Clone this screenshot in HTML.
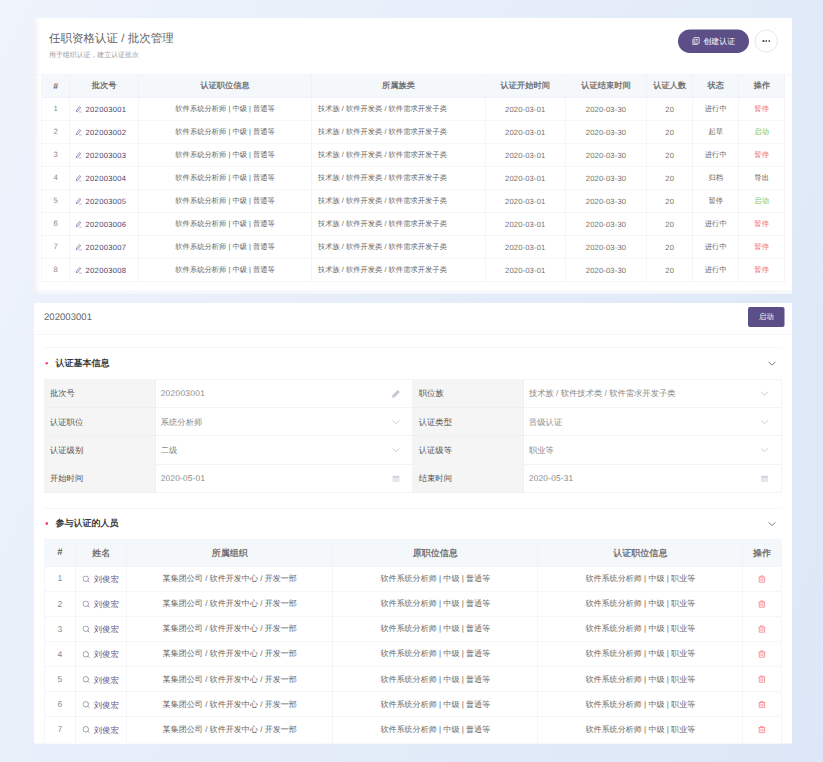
<!DOCTYPE html>
<html lang="zh">
<head>
<meta charset="utf-8">
<title>任职资格认证 / 批次管理</title>
<style>
*{box-sizing:border-box;margin:0;padding:0}
html,body{width:823px;height:762px;overflow:hidden;background:#e6edf9}
body{font-family:"Liberation Sans",sans-serif;color:#666;text-rendering:geometricPrecision;line-height:1.2}
#vp{position:absolute;left:0;top:0;width:823px;height:762px;overflow:hidden;
 background:linear-gradient(115deg,#eff4fc 0%,#e1eaf8 70%,#dee7f7 100%)}
#pg{position:absolute;left:0;top:0;width:1646px;height:1524px;transform:scale(.5);transform-origin:0 0}
.j{display:inline-block;flex:none;white-space:nowrap;text-align:justify;text-align-last:justify}
.card{position:absolute;background:#fff}
#c1{left:68px;top:36px;width:1516px;height:552px}
#ft{left:0;top:545px;width:1516px;height:7px;background:#f6f7fa}
#c2{left:68px;top:605.6px;width:1516px;height:881.8px;overflow:hidden}
.abs{position:absolute;white-space:nowrap}
#t1{left:30px;top:24.8px;font-size:23px;line-height:30px;color:#626262}
#t2{left:30px;top:64.2px;font-size:13.8px;line-height:18px;color:#9a9a9a}
#b1{left:1288.4px;top:22.8px;width:141.8px;height:46.8px;border-radius:24px;background:#5c4f88;color:#fff;font-size:15.8px;display:flex;align-items:center;justify-content:center;padding-right:2px}
#b2{left:1441.4px;top:22.8px;width:46.6px;height:46.6px;border-radius:50%;border:2px solid #e6e6ee;background:#fff;display:flex;align-items:center;justify-content:center}
#b2 i{display:block;width:3.4px;height:3.4px;border-radius:50%;background:#444;margin:0 1.2px}
#body1{left:0;top:111.6px;width:1516px;height:438.4px;border-top:1px solid #f0f1f5}
#lg{left:0;top:0;width:12px;height:552px;background:linear-gradient(90deg,rgba(228,228,234,.45),rgba(228,228,234,0))}
.tb{position:absolute;border-top:1px solid #e9ecf4;border-left:1px solid #e9ecf4;background:#fff}
.r{display:flex}
.c{flex:none;border-right:1px solid #e9ecf4;border-bottom:1px solid #e9ecf4;display:flex;align-items:center;justify-content:center;white-space:nowrap;overflow:hidden}
.h .c{background:#f5f8fb;color:#707070;font-weight:bold}
.h .hs{font-weight:bold;color:#6a6a6a;font-size:1.06em}
#tb1{left:15px;top:112.4px;width:1485.8px}
#tb1 .r{height:46px;font-size:14.6px}
#tb1 .h{height:46.8px;font-size:16.4px}
#tb1 .c{height:100%}
.l{justify-content:flex-start;padding-left:12px}
.n{color:#888;font-size:1.06em}
.l2{justify-content:flex-start;padding-left:11.4px}
.num{letter-spacing:.62px;font-size:15.2px}
.dt{letter-spacing:.3px}
#tb1 .c:not(.lk)>.num{color:#747474}
.fv .num{font-size:16.6px;letter-spacing:.64px}
.fv .dt{letter-spacing:.42px}
.lk{color:#4b4570}
.red{color:#f2676b}.grn{color:#79c253}.drk{color:#555}
svg{display:block;flex:none}
.pen{width:13px;height:13.4px;margin-right:7.2px;color:#5b4c8b}
.sea{width:14.6px;height:14.6px;margin-right:7.6px;color:#79748e;position:relative;top:.8px}
.tra{width:15.5px;height:16px;color:#f8878e}
.doc{width:20px;height:20px;margin-right:4.4px}
#b1 .j{position:relative;top:1.4px}
#h2{left:0;top:0;width:1516px;height:64.6px;border-bottom:1px solid #eceef2}
#h2t{left:20px;top:17.4px;font-size:19.2px;line-height:24px;color:#666}
#b3{left:1428.4px;top:8px;width:72.6px;height:40.4px;border-radius:4px;background:#5c4f88;color:#fff;font-size:14.6px;display:flex;align-items:center;justify-content:center}
.sl{left:19.8px;width:1474.8px;height:0;border-top:1px solid #eceef2}
.st{left:43px;font-size:18px;line-height:24px;font-weight:bold;color:#333}
.dot{left:22.6px;width:5.4px;height:5.4px;border-radius:50%;background:#f0457e}
.chev{width:20px;height:20px}
.sc{color:#777}
#fm{left:19.8px;top:152.8px;width:1474.8px;border-top:1px solid #e8e8e8;border-left:1px solid #e8e8e8;position:absolute}
#fm .r{height:56.5px;font-size:16.6px}
#fm .c{height:100%;border-color:#e8e8e8;justify-content:flex-start}
.fl{background:#f5f5f5;color:#4e4e4e;padding-left:11px}
.fv{color:#888;padding-left:9.4px;position:relative}
.fv svg{position:absolute;right:23px;top:50%;margin-top:-10px;color:#c3c9d6}
.cal,.penf{width:16px;height:16px}
.fv .penf{color:#c6c9d2;width:17.6px;height:17.6px}
.fv .cal,.fv .penf{margin-top:-8px;right:25px}
#tb2{left:19.8px;top:473px;width:1474.8px}
#tb2 .r{height:50.2px;font-size:16.1px}
#tb2 .h{height:53.4px;font-size:18px}
#tb2 .c{height:100%}
#tb2 .r:nth-child(8) .c{border-bottom-color:transparent}
.nm{color:#5f5787}
.nm .j{font-size:16.7px;position:relative;top:1.2px}
.l3{justify-content:flex-start;padding-left:13.4px}
</style>
</head>
<body>
<div id="vp"><div id="pg">
<div class="card" id="c1">
<div class="abs" id="body1"></div><div class="abs" id="ft"></div><div class="abs" id="lg"></div>
<div class="abs" id="t1"><span class="j" style="width:249.4px">任职资格认证 / 批次管理</span></div>
<div class="abs" id="t2"><span class="j" style="width:179.6px">用于组织认证，建立认证批次</span></div>
<div class="abs" id="b1"><svg class="doc" viewBox="0 0 16 16"><path d="M5 2.5 H13 V11.5 H5 Z M3 4.5 V13.5 H11 M7 5.5 H11 M7 8 H11" fill="none" stroke="currentColor" stroke-width="1.2"/></svg><span class="j" style="width:63.4px">创建认证</span></div>
<div class="abs" id="b2"><i></i><i></i><i></i></div>
<div class="tb" id="tb1">
<div class="r h"><div class="c hs" style="width:55.5px">#</div><div class="c " style="width:138px"><span class="j" style="width:49.4px">批次号</span></div><div class="c " style="width:346.3px"><span class="j" style="width:98.6px">认证职位信息</span></div><div class="c " style="width:347.2px"><span class="j" style="width:65.8px">所属族类</span></div><div class="c " style="width:160px"><span class="j" style="width:98.6px">认证开始时间</span></div><div class="c " style="width:163px"><span class="j" style="width:98.6px">认证结束时间</span></div><div class="c " style="width:92px"><span class="j" style="width:65.8px">认证人数</span></div><div class="c " style="width:92px"><span class="j" style="width:33.0px">状态</span></div><div class="c " style="width:91.8px"><span class="j" style="width:33.0px">操作</span></div></div>
<div class="r"><div class="c n" style="width:55.5px">1</div><div class="c lk l2" style="width:138px"><svg class="pen" viewBox="0 0 13 13"><path d="M1.3 11.6 L2.1 8.3 L7.1 1.9 A1.6 1.6 0 0 1 9.7 3.8 L4.5 10.4 Z" fill="none" stroke="currentColor" stroke-width="1.2" stroke-linejoin="round"/><path d="M7 12.2 H12.6" stroke="currentColor" stroke-width="1.2" fill="none"/></svg><span class="num">202003001</span></div><div class="c " style="width:346.3px"><span class="j" style="width:199.2px">软件系统分析师 | 中级 | 普通等</span></div><div class="c l" style="width:347.2px"><span class="j" style="width:258.1px">技术族 / 软件开发类 / 软件需求开发子类</span></div><div class="c " style="width:160px"><span class="num dt">2020-03-01</span></div><div class="c " style="width:163px"><span class="num dt">2020-03-30</span></div><div class="c " style="width:92px"><span class="num">20</span></div><div class="c " style="width:92px"><span class="j" style="width:44.0px">进行中</span></div><div class="c red" style="width:91.8px"><span class="j" style="width:29.4px">暂停</span></div></div>
<div class="r"><div class="c n" style="width:55.5px">2</div><div class="c lk l2" style="width:138px"><svg class="pen" viewBox="0 0 13 13"><path d="M1.3 11.6 L2.1 8.3 L7.1 1.9 A1.6 1.6 0 0 1 9.7 3.8 L4.5 10.4 Z" fill="none" stroke="currentColor" stroke-width="1.2" stroke-linejoin="round"/><path d="M7 12.2 H12.6" stroke="currentColor" stroke-width="1.2" fill="none"/></svg><span class="num">202003002</span></div><div class="c " style="width:346.3px"><span class="j" style="width:199.2px">软件系统分析师 | 中级 | 普通等</span></div><div class="c l" style="width:347.2px"><span class="j" style="width:258.1px">技术族 / 软件开发类 / 软件需求开发子类</span></div><div class="c " style="width:160px"><span class="num dt">2020-03-01</span></div><div class="c " style="width:163px"><span class="num dt">2020-03-30</span></div><div class="c " style="width:92px"><span class="num">20</span></div><div class="c " style="width:92px"><span class="j" style="width:29.4px">起草</span></div><div class="c grn" style="width:91.8px"><span class="j" style="width:29.4px">启动</span></div></div>
<div class="r"><div class="c n" style="width:55.5px">3</div><div class="c lk l2" style="width:138px"><svg class="pen" viewBox="0 0 13 13"><path d="M1.3 11.6 L2.1 8.3 L7.1 1.9 A1.6 1.6 0 0 1 9.7 3.8 L4.5 10.4 Z" fill="none" stroke="currentColor" stroke-width="1.2" stroke-linejoin="round"/><path d="M7 12.2 H12.6" stroke="currentColor" stroke-width="1.2" fill="none"/></svg><span class="num">202003003</span></div><div class="c " style="width:346.3px"><span class="j" style="width:199.2px">软件系统分析师 | 中级 | 普通等</span></div><div class="c l" style="width:347.2px"><span class="j" style="width:258.1px">技术族 / 软件开发类 / 软件需求开发子类</span></div><div class="c " style="width:160px"><span class="num dt">2020-03-01</span></div><div class="c " style="width:163px"><span class="num dt">2020-03-30</span></div><div class="c " style="width:92px"><span class="num">20</span></div><div class="c " style="width:92px"><span class="j" style="width:44.0px">进行中</span></div><div class="c red" style="width:91.8px"><span class="j" style="width:29.4px">暂停</span></div></div>
<div class="r"><div class="c n" style="width:55.5px">4</div><div class="c lk l2" style="width:138px"><svg class="pen" viewBox="0 0 13 13"><path d="M1.3 11.6 L2.1 8.3 L7.1 1.9 A1.6 1.6 0 0 1 9.7 3.8 L4.5 10.4 Z" fill="none" stroke="currentColor" stroke-width="1.2" stroke-linejoin="round"/><path d="M7 12.2 H12.6" stroke="currentColor" stroke-width="1.2" fill="none"/></svg><span class="num">202003004</span></div><div class="c " style="width:346.3px"><span class="j" style="width:199.2px">软件系统分析师 | 中级 | 普通等</span></div><div class="c l" style="width:347.2px"><span class="j" style="width:258.1px">技术族 / 软件开发类 / 软件需求开发子类</span></div><div class="c " style="width:160px"><span class="num dt">2020-03-01</span></div><div class="c " style="width:163px"><span class="num dt">2020-03-30</span></div><div class="c " style="width:92px"><span class="num">20</span></div><div class="c " style="width:92px"><span class="j" style="width:29.4px">归档</span></div><div class="c drk" style="width:91.8px"><span class="j" style="width:29.4px">导出</span></div></div>
<div class="r"><div class="c n" style="width:55.5px">5</div><div class="c lk l2" style="width:138px"><svg class="pen" viewBox="0 0 13 13"><path d="M1.3 11.6 L2.1 8.3 L7.1 1.9 A1.6 1.6 0 0 1 9.7 3.8 L4.5 10.4 Z" fill="none" stroke="currentColor" stroke-width="1.2" stroke-linejoin="round"/><path d="M7 12.2 H12.6" stroke="currentColor" stroke-width="1.2" fill="none"/></svg><span class="num">202003005</span></div><div class="c " style="width:346.3px"><span class="j" style="width:199.2px">软件系统分析师 | 中级 | 普通等</span></div><div class="c l" style="width:347.2px"><span class="j" style="width:258.1px">技术族 / 软件开发类 / 软件需求开发子类</span></div><div class="c " style="width:160px"><span class="num dt">2020-03-01</span></div><div class="c " style="width:163px"><span class="num dt">2020-03-30</span></div><div class="c " style="width:92px"><span class="num">20</span></div><div class="c " style="width:92px"><span class="j" style="width:29.4px">暂停</span></div><div class="c grn" style="width:91.8px"><span class="j" style="width:29.4px">启动</span></div></div>
<div class="r"><div class="c n" style="width:55.5px">6</div><div class="c lk l2" style="width:138px"><svg class="pen" viewBox="0 0 13 13"><path d="M1.3 11.6 L2.1 8.3 L7.1 1.9 A1.6 1.6 0 0 1 9.7 3.8 L4.5 10.4 Z" fill="none" stroke="currentColor" stroke-width="1.2" stroke-linejoin="round"/><path d="M7 12.2 H12.6" stroke="currentColor" stroke-width="1.2" fill="none"/></svg><span class="num">202003006</span></div><div class="c " style="width:346.3px"><span class="j" style="width:199.2px">软件系统分析师 | 中级 | 普通等</span></div><div class="c l" style="width:347.2px"><span class="j" style="width:258.1px">技术族 / 软件开发类 / 软件需求开发子类</span></div><div class="c " style="width:160px"><span class="num dt">2020-03-01</span></div><div class="c " style="width:163px"><span class="num dt">2020-03-30</span></div><div class="c " style="width:92px"><span class="num">20</span></div><div class="c " style="width:92px"><span class="j" style="width:44.0px">进行中</span></div><div class="c red" style="width:91.8px"><span class="j" style="width:29.4px">暂停</span></div></div>
<div class="r"><div class="c n" style="width:55.5px">7</div><div class="c lk l2" style="width:138px"><svg class="pen" viewBox="0 0 13 13"><path d="M1.3 11.6 L2.1 8.3 L7.1 1.9 A1.6 1.6 0 0 1 9.7 3.8 L4.5 10.4 Z" fill="none" stroke="currentColor" stroke-width="1.2" stroke-linejoin="round"/><path d="M7 12.2 H12.6" stroke="currentColor" stroke-width="1.2" fill="none"/></svg><span class="num">202003007</span></div><div class="c " style="width:346.3px"><span class="j" style="width:199.2px">软件系统分析师 | 中级 | 普通等</span></div><div class="c l" style="width:347.2px"><span class="j" style="width:258.1px">技术族 / 软件开发类 / 软件需求开发子类</span></div><div class="c " style="width:160px"><span class="num dt">2020-03-01</span></div><div class="c " style="width:163px"><span class="num dt">2020-03-30</span></div><div class="c " style="width:92px"><span class="num">20</span></div><div class="c " style="width:92px"><span class="j" style="width:44.0px">进行中</span></div><div class="c red" style="width:91.8px"><span class="j" style="width:29.4px">暂停</span></div></div>
<div class="r"><div class="c n" style="width:55.5px">8</div><div class="c lk l2" style="width:138px"><svg class="pen" viewBox="0 0 13 13"><path d="M1.3 11.6 L2.1 8.3 L7.1 1.9 A1.6 1.6 0 0 1 9.7 3.8 L4.5 10.4 Z" fill="none" stroke="currentColor" stroke-width="1.2" stroke-linejoin="round"/><path d="M7 12.2 H12.6" stroke="currentColor" stroke-width="1.2" fill="none"/></svg><span class="num">202003008</span></div><div class="c " style="width:346.3px"><span class="j" style="width:199.2px">软件系统分析师 | 中级 | 普通等</span></div><div class="c l" style="width:347.2px"><span class="j" style="width:258.1px">技术族 / 软件开发类 / 软件需求开发子类</span></div><div class="c " style="width:160px"><span class="num dt">2020-03-01</span></div><div class="c " style="width:163px"><span class="num dt">2020-03-30</span></div><div class="c " style="width:92px"><span class="num">20</span></div><div class="c " style="width:92px"><span class="j" style="width:44.0px">进行中</span></div><div class="c red" style="width:91.8px"><span class="j" style="width:29.4px">暂停</span></div></div>
</div></div>
<div class="card" id="c2">
<div class="abs" id="h2"></div><div class="abs" id="h2t">202003001</div><div class="abs" id="b3"><span class="j" style="width:29.4px">启动</span></div>
<div class="abs sl" style="top:89.8px"></div>
<div class="abs dot" style="top:118.4px"></div><div class="abs st" style="top:108.4px"><span class="j" style="width:108.2px">认证基本信息</span></div>
<div class="abs sc" style="left:1466.2px;top:111.8px"><svg class="chev" viewBox="0 0 16 16"><path d="M2.5 5.5 L8 10.5 L13.5 5.5" fill="none" stroke="currentColor" stroke-width="1.5"/></svg></div>
<div id="fm">
<div class="r"><div class="c fl" style="width:223.2px"><span class="j" style="width:50.0px">批次号</span></div><div class="c fv" style="width:514.4px"><span class="num">202003001</span><svg class="penf" viewBox="0 0 16 16"><path d="M0.8 15.2 L1.8 10.2 L10.4 1.6 A1.3 1.3 0 0 1 12.2 1.6 L14.4 3.8 A1.3 1.3 0 0 1 14.4 5.6 L5.8 14.2 Z" fill="currentColor"/></svg></div><div class="c fl" style="width:222px"><span class="j" style="width:50.0px">职位族</span></div><div class="c fv" style="width:514.2px"><span class="j" style="width:293.4px">技术族 / 软件技术类 / 软件需求开发子类</span><svg class="chev" viewBox="0 0 16 16"><path d="M2.5 5.5 L8 10.5 L13.5 5.5" fill="none" stroke="currentColor" stroke-width="1.5"/></svg></div></div>
<div class="r"><div class="c fl" style="width:223.2px"><span class="j" style="width:66.6px">认证职位</span></div><div class="c fv" style="width:514.4px"><span class="j" style="width:83.2px">系统分析师</span><svg class="chev" viewBox="0 0 16 16"><path d="M2.5 5.5 L8 10.5 L13.5 5.5" fill="none" stroke="currentColor" stroke-width="1.5"/></svg></div><div class="c fl" style="width:222px"><span class="j" style="width:66.6px">认证类型</span></div><div class="c fv" style="width:514.2px"><span class="j" style="width:66.6px">晋级认证</span><svg class="chev" viewBox="0 0 16 16"><path d="M2.5 5.5 L8 10.5 L13.5 5.5" fill="none" stroke="currentColor" stroke-width="1.5"/></svg></div></div>
<div class="r"><div class="c fl" style="width:223.2px"><span class="j" style="width:66.6px">认证级别</span></div><div class="c fv" style="width:514.4px"><span class="j" style="width:33.4px">二级</span><svg class="chev" viewBox="0 0 16 16"><path d="M2.5 5.5 L8 10.5 L13.5 5.5" fill="none" stroke="currentColor" stroke-width="1.5"/></svg></div><div class="c fl" style="width:222px"><span class="j" style="width:66.6px">认证级等</span></div><div class="c fv" style="width:514.2px"><span class="j" style="width:50.0px">职业等</span><svg class="chev" viewBox="0 0 16 16"><path d="M2.5 5.5 L8 10.5 L13.5 5.5" fill="none" stroke="currentColor" stroke-width="1.5"/></svg></div></div>
<div class="r"><div class="c fl" style="width:223.2px"><span class="j" style="width:66.6px">开始时间</span></div><div class="c fv" style="width:514.4px"><span class="num dt">2020-05-01</span><svg class="cal" viewBox="0 0 16 16"><rect x="1" y="3" width="14" height="12" rx="1.5" fill="#e6e8ee"/><rect x="1" y="3" width="14" height="3.4" rx="1.2" fill="#cfd3dc"/><path d="M4.5 1.2 V4 M11.5 1.2 V4" stroke="#cfd3dc" stroke-width="1.6" fill="none"/></svg></div><div class="c fl" style="width:222px"><span class="j" style="width:66.6px">结束时间</span></div><div class="c fv" style="width:514.2px"><span class="num dt">2020-05-31</span><svg class="cal" viewBox="0 0 16 16"><rect x="1" y="3" width="14" height="12" rx="1.5" fill="#e6e8ee"/><rect x="1" y="3" width="14" height="3.4" rx="1.2" fill="#cfd3dc"/><path d="M4.5 1.2 V4 M11.5 1.2 V4" stroke="#cfd3dc" stroke-width="1.6" fill="none"/></svg></div></div>
</div>
<div class="abs sl" style="top:410.4px"></div>
<div class="abs dot" style="top:438.6px"></div><div class="abs st" style="top:428.8px"><span class="j" style="width:126.2px">参与认证的人员</span></div>
<div class="abs sc" style="left:1466.2px;top:432px"><svg class="chev" viewBox="0 0 16 16"><path d="M2.5 5.5 L8 10.5 L13.5 5.5" fill="none" stroke="currentColor" stroke-width="1.5"/></svg></div>
<div class="tb" id="tb2">
<div class="r h"><div class="c hs" style="width:63px">#</div><div class="c " style="width:102.4px"><span class="j" style="width:36.2px">姓名</span></div><div class="c " style="width:411.6px"><span class="j" style="width:72.2px">所属组织</span></div><div class="c " style="width:410.6px"><span class="j" style="width:90.2px">原职位信息</span></div><div class="c " style="width:409.6px"><span class="j" style="width:108.2px">认证职位信息</span></div><div class="c " style="width:76.8px"><span class="j" style="width:36.2px">操作</span></div></div>
<div class="r"><div class="c n" style="width:63px">1</div><div class="c nm l3" style="width:102.4px"><svg class="sea" viewBox="0 0 14 14"><circle cx="6.3" cy="6.3" r="5.3" fill="none" stroke="currentColor" stroke-width="1.3"/><path d="M10 10 L13 13" stroke="currentColor" stroke-width="1.4" fill="none"/></svg><span class="j" style="width:50.3px">刘俊宏</span></div><div class="c " style="width:411.6px"><span class="j" style="width:268.5px">某集团公司 / 软件开发中心 / 开发一部</span></div><div class="c " style="width:410.6px"><span class="j" style="width:219.6px">软件系统分析师 | 中级 | 普通等</span></div><div class="c " style="width:409.6px"><span class="j" style="width:219.6px">软件系统分析师 | 中级 | 职业等</span></div><div class="c " style="width:76.8px"><svg class="tra" viewBox="0 0 16 16"><path d="M1 4 H15 M5.5 4 V1.6 H10.5 V4 M2.6 4 V14.6 H13.4 V4 M6.2 6.8 V12 M9.8 6.8 V12" fill="none" stroke="currentColor" stroke-width="1.75"/></svg></div></div>
<div class="r"><div class="c n" style="width:63px">2</div><div class="c nm l3" style="width:102.4px"><svg class="sea" viewBox="0 0 14 14"><circle cx="6.3" cy="6.3" r="5.3" fill="none" stroke="currentColor" stroke-width="1.3"/><path d="M10 10 L13 13" stroke="currentColor" stroke-width="1.4" fill="none"/></svg><span class="j" style="width:50.3px">刘俊宏</span></div><div class="c " style="width:411.6px"><span class="j" style="width:268.5px">某集团公司 / 软件开发中心 / 开发一部</span></div><div class="c " style="width:410.6px"><span class="j" style="width:219.6px">软件系统分析师 | 中级 | 普通等</span></div><div class="c " style="width:409.6px"><span class="j" style="width:219.6px">软件系统分析师 | 中级 | 职业等</span></div><div class="c " style="width:76.8px"><svg class="tra" viewBox="0 0 16 16"><path d="M1 4 H15 M5.5 4 V1.6 H10.5 V4 M2.6 4 V14.6 H13.4 V4 M6.2 6.8 V12 M9.8 6.8 V12" fill="none" stroke="currentColor" stroke-width="1.75"/></svg></div></div>
<div class="r"><div class="c n" style="width:63px">3</div><div class="c nm l3" style="width:102.4px"><svg class="sea" viewBox="0 0 14 14"><circle cx="6.3" cy="6.3" r="5.3" fill="none" stroke="currentColor" stroke-width="1.3"/><path d="M10 10 L13 13" stroke="currentColor" stroke-width="1.4" fill="none"/></svg><span class="j" style="width:50.3px">刘俊宏</span></div><div class="c " style="width:411.6px"><span class="j" style="width:268.5px">某集团公司 / 软件开发中心 / 开发一部</span></div><div class="c " style="width:410.6px"><span class="j" style="width:219.6px">软件系统分析师 | 中级 | 普通等</span></div><div class="c " style="width:409.6px"><span class="j" style="width:219.6px">软件系统分析师 | 中级 | 职业等</span></div><div class="c " style="width:76.8px"><svg class="tra" viewBox="0 0 16 16"><path d="M1 4 H15 M5.5 4 V1.6 H10.5 V4 M2.6 4 V14.6 H13.4 V4 M6.2 6.8 V12 M9.8 6.8 V12" fill="none" stroke="currentColor" stroke-width="1.75"/></svg></div></div>
<div class="r"><div class="c n" style="width:63px">4</div><div class="c nm l3" style="width:102.4px"><svg class="sea" viewBox="0 0 14 14"><circle cx="6.3" cy="6.3" r="5.3" fill="none" stroke="currentColor" stroke-width="1.3"/><path d="M10 10 L13 13" stroke="currentColor" stroke-width="1.4" fill="none"/></svg><span class="j" style="width:50.3px">刘俊宏</span></div><div class="c " style="width:411.6px"><span class="j" style="width:268.5px">某集团公司 / 软件开发中心 / 开发一部</span></div><div class="c " style="width:410.6px"><span class="j" style="width:219.6px">软件系统分析师 | 中级 | 普通等</span></div><div class="c " style="width:409.6px"><span class="j" style="width:219.6px">软件系统分析师 | 中级 | 职业等</span></div><div class="c " style="width:76.8px"><svg class="tra" viewBox="0 0 16 16"><path d="M1 4 H15 M5.5 4 V1.6 H10.5 V4 M2.6 4 V14.6 H13.4 V4 M6.2 6.8 V12 M9.8 6.8 V12" fill="none" stroke="currentColor" stroke-width="1.75"/></svg></div></div>
<div class="r"><div class="c n" style="width:63px">5</div><div class="c nm l3" style="width:102.4px"><svg class="sea" viewBox="0 0 14 14"><circle cx="6.3" cy="6.3" r="5.3" fill="none" stroke="currentColor" stroke-width="1.3"/><path d="M10 10 L13 13" stroke="currentColor" stroke-width="1.4" fill="none"/></svg><span class="j" style="width:50.3px">刘俊宏</span></div><div class="c " style="width:411.6px"><span class="j" style="width:268.5px">某集团公司 / 软件开发中心 / 开发一部</span></div><div class="c " style="width:410.6px"><span class="j" style="width:219.6px">软件系统分析师 | 中级 | 普通等</span></div><div class="c " style="width:409.6px"><span class="j" style="width:219.6px">软件系统分析师 | 中级 | 职业等</span></div><div class="c " style="width:76.8px"><svg class="tra" viewBox="0 0 16 16"><path d="M1 4 H15 M5.5 4 V1.6 H10.5 V4 M2.6 4 V14.6 H13.4 V4 M6.2 6.8 V12 M9.8 6.8 V12" fill="none" stroke="currentColor" stroke-width="1.75"/></svg></div></div>
<div class="r"><div class="c n" style="width:63px">6</div><div class="c nm l3" style="width:102.4px"><svg class="sea" viewBox="0 0 14 14"><circle cx="6.3" cy="6.3" r="5.3" fill="none" stroke="currentColor" stroke-width="1.3"/><path d="M10 10 L13 13" stroke="currentColor" stroke-width="1.4" fill="none"/></svg><span class="j" style="width:50.3px">刘俊宏</span></div><div class="c " style="width:411.6px"><span class="j" style="width:268.5px">某集团公司 / 软件开发中心 / 开发一部</span></div><div class="c " style="width:410.6px"><span class="j" style="width:219.6px">软件系统分析师 | 中级 | 普通等</span></div><div class="c " style="width:409.6px"><span class="j" style="width:219.6px">软件系统分析师 | 中级 | 职业等</span></div><div class="c " style="width:76.8px"><svg class="tra" viewBox="0 0 16 16"><path d="M1 4 H15 M5.5 4 V1.6 H10.5 V4 M2.6 4 V14.6 H13.4 V4 M6.2 6.8 V12 M9.8 6.8 V12" fill="none" stroke="currentColor" stroke-width="1.75"/></svg></div></div>
<div class="r"><div class="c n" style="width:63px">7</div><div class="c nm l3" style="width:102.4px"><svg class="sea" viewBox="0 0 14 14"><circle cx="6.3" cy="6.3" r="5.3" fill="none" stroke="currentColor" stroke-width="1.3"/><path d="M10 10 L13 13" stroke="currentColor" stroke-width="1.4" fill="none"/></svg><span class="j" style="width:50.3px">刘俊宏</span></div><div class="c " style="width:411.6px"><span class="j" style="width:268.5px">某集团公司 / 软件开发中心 / 开发一部</span></div><div class="c " style="width:410.6px"><span class="j" style="width:219.6px">软件系统分析师 | 中级 | 普通等</span></div><div class="c " style="width:409.6px"><span class="j" style="width:219.6px">软件系统分析师 | 中级 | 职业等</span></div><div class="c " style="width:76.8px"><svg class="tra" viewBox="0 0 16 16"><path d="M1 4 H15 M5.5 4 V1.6 H10.5 V4 M2.6 4 V14.6 H13.4 V4 M6.2 6.8 V12 M9.8 6.8 V12" fill="none" stroke="currentColor" stroke-width="1.75"/></svg></div></div>
<div class="r"><div class="c n" style="width:63px">8</div><div class="c nm l3" style="width:102.4px"><svg class="sea" viewBox="0 0 14 14"><circle cx="6.3" cy="6.3" r="5.3" fill="none" stroke="currentColor" stroke-width="1.3"/><path d="M10 10 L13 13" stroke="currentColor" stroke-width="1.4" fill="none"/></svg><span class="j" style="width:50.3px">刘俊宏</span></div><div class="c " style="width:411.6px"><span class="j" style="width:268.5px">某集团公司 / 软件开发中心 / 开发一部</span></div><div class="c " style="width:410.6px"><span class="j" style="width:219.6px">软件系统分析师 | 中级 | 普通等</span></div><div class="c " style="width:409.6px"><span class="j" style="width:219.6px">软件系统分析师 | 中级 | 职业等</span></div><div class="c " style="width:76.8px"><svg class="tra" viewBox="0 0 16 16"><path d="M1 4 H15 M5.5 4 V1.6 H10.5 V4 M2.6 4 V14.6 H13.4 V4 M6.2 6.8 V12 M9.8 6.8 V12" fill="none" stroke="currentColor" stroke-width="1.75"/></svg></div></div>
</div></div>
</div></div>
</body>
</html>
